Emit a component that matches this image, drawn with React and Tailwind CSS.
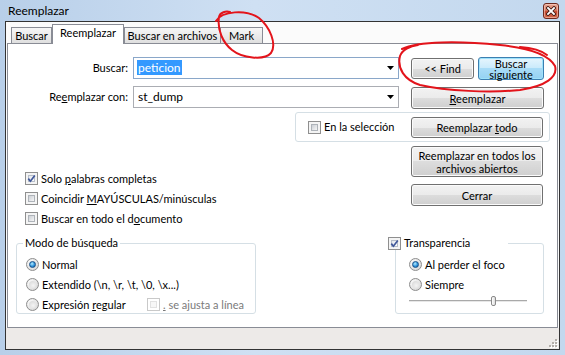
import React from "react";

const BTN =
  "flex shrink-0 items-center justify-center rounded-[3px] border border-[#707070] bg-[linear-gradient(#f2f2f2,#ebebeb_50%,#dddddd_50%,#cfcfcf)] shadow-[inset_0_0_0_1px_#fbfbfb] text-center leading-[13px] whitespace-nowrap";

const TAB =
  "flex h-[16px] shrink-0 items-center justify-center whitespace-nowrap border border-b-0 border-[#898c95] bg-[linear-gradient(#f6f6f6,#ebebeb_50%,#dfdfdf)] leading-[14px]";

function Check({ checked, disabled }) {
  if (disabled) {
    return (
      <span className="flex h-[13px] w-[13px] shrink-0 border border-[#c9c9c9] bg-white p-[2px]">
        <span className="h-full w-full border border-[#e2e2e2] bg-[#f7f7f7]" />
      </span>
    );
  }
  return (
    <span className="relative flex h-[13px] w-[13px] shrink-0 border border-[#8f8f8f] bg-[#f4f4f4] p-[2px]">
      <span
        className={
          checked
            ? "h-full w-full border border-[#b7bec9] bg-[linear-gradient(135deg,#e4e8ee,#fbfbfc)]"
            : "h-full w-full border border-[#aeb3b9] bg-[linear-gradient(135deg,#cbcfd5,#f6f6f6)]"
        }
      />
      {checked && (
        <svg width="11" height="11" viewBox="0 0 11 11" className="absolute left-0 top-0">
          <path d="M2.3 5.6 L4.4 8.2 L8.8 2.4" fill="none" stroke="#40589a" strokeWidth="1.7" />
        </svg>
      )}
    </span>
  );
}

function Radio({ checked }) {
  return (
    <span className="flex h-[13px] w-[13px] shrink-0 items-center justify-center rounded-full border border-[#8d8d8d] bg-[radial-gradient(circle_at_35%_35%,#ffffff,#e2e2e2_60%,#cfcfcf)]">
      {checked ? (
        <span className="h-[7px] w-[7px] rounded-full border border-[#185088] bg-[radial-gradient(circle_at_40%_35%,#b6ecff,#2f94dc_55%,#0d5b9f)]" />
      ) : (
        <span className="h-[7px] w-[7px] rounded-full bg-[radial-gradient(circle_at_60%_65%,#f4f4f4,#d4d4d4)]" />
      )}
    </span>
  );
}

function Combo({ focused, children }) {
  return (
    <div
      className={
        focused
          ? "flex h-[22px] w-[266px] shrink-0 items-center border border-[#8aa7c9] bg-white pl-[3px]"
          : "flex h-[22px] w-[266px] shrink-0 items-center border border-[#abadb3] bg-white pl-[3px]"
      }
    >
      <div className="flex-1 text-[12px] leading-[14px]">{children}</div>
      <svg width="7" height="4" viewBox="0 0 7 4" className="mr-[4px]">
        <path d="M0 0H7L3.5 4Z" fill="#000" />
      </svg>
    </div>
  );
}

function CloseButton() {
  return (
    <div className="mt-[3px] flex h-[16px] w-[16px] items-center justify-center rounded-[3px] border border-[#6e2a1e] bg-[linear-gradient(#e9a895,#d67a62_45%,#c4472d_55%,#d36a4c)] shadow-[inset_0_0_0_1px_rgba(255,220,210,0.5)]">
      <svg width="10" height="10" viewBox="0 0 10 10">
        <path d="M2 2 L8 8 M8 2 L2 8" stroke="#3b1610" strokeWidth="3.4" strokeLinecap="square" />
        <path d="M2 2 L8 8 M8 2 L2 8" stroke="#ffffff" strokeWidth="1.8" strokeLinecap="square" />
      </svg>
    </div>
  );
}

function SizeGrip() {
  const dots = [
    [6, 0],
    [6, 3],
    [3, 3],
    [6, 6],
    [3, 6],
    [0, 6],
  ];
  return (
    <svg width="9" height="9" viewBox="0 0 9 9">
      {dots.map(([x, y]) => (
        <g key={`${x}-${y}`}>
          <rect x={x + 1} y={y + 1} width="2" height="2" fill="#ffffff" />
          <rect x={x} y={y} width="2" height="2" fill="#b3aea9" />
        </g>
      ))}
    </svg>
  );
}

function Annotations() {
  return (
    <svg
      width="565"
      height="355"
      viewBox="0 0 565 355"
      className="pointer-events-none absolute left-0 top-0"
    >
      <g fill="none" stroke="#e3141b" strokeWidth="2" strokeLinecap="round">
        <path d="M216 21 C222 11, 246 9, 259 18 C270 27, 277 44, 271 53 C264 61, 242 58, 232 50 C223 43, 217 30, 219 17 C220 12, 226 11, 230 12" />
        <path d="M402 49 C418 41, 460 41, 500 45 C530 48, 549 55, 555 66 C558 77, 546 86, 520 90 C490 93, 446 91, 420 85 C404 80, 397 68, 400 56 C402 50, 410 46, 418 45 M520 47 C534 48, 542 51, 547 55" />
      </g>
    </svg>
  );
}

export default function App() {
  return (
    <div className="relative flex h-[355px] w-[565px] flex-col overflow-hidden bg-[linear-gradient(90deg,#b8cfe9,#cfe0f3_45%,#c3d8ee)] text-[11px] text-black [font-family:Lato,sans-serif]">
      <div className="flex h-[21px] shrink-0 items-start justify-between pl-[8px] pr-[6px]">
        <span className="mt-[4px] text-[12px] leading-[14px]">Reemplazar</span>
        <CloseButton />
      </div>

      <div className="mx-[5px] flex h-[329px] flex-col border border-[#333333] bg-[#fbfbfb]">
        {/* tabs */}
        <div className="flex h-[21px] shrink-0 items-end pl-[5px]">
          <div className={`${TAB} w-[41px]`}>Buscar</div>
          <div className="relative z-10 -mb-[1px] flex h-[20px] w-[72px] shrink-0 items-start justify-center whitespace-nowrap border border-b-0 border-[#898c95] bg-white pt-[1px] leading-[14px]">
            Reemplazar
          </div>
          <div className={`${TAB} w-[97px]`}>Buscar en archivos</div>
          <div className={`${TAB} -ml-[1px] w-[43px]`}>Mark</div>
        </div>

        {/* panel */}
        <div className="mx-[1px] flex h-[285px] shrink-0 flex-col border border-[#898c95] bg-white">
          <div className="mt-[13px] flex items-start">
            <div className="w-[125px] pr-[5px] text-right leading-[22px]">Buscar:</div>
            <Combo focused>
              <span className="bg-[#3399ff] px-[1px] text-white">peticion</span>
            </Combo>
            <div className={`${BTN} ml-[12px] mt-[1px] h-[21px] w-[63px]`}>&lt;&lt; Find</div>
            <div className="ml-[4px] flex h-[23px] w-[66px] shrink-0 flex-col items-center rounded-[3px] border border-[#3c7fb1] bg-[linear-gradient(#e6f5fd,#c9eafb_50%,#a9dcf7_50%,#94d2f3)] text-center leading-[11px] shadow-[inset_0_0_0_1px_#9ee2fb]">
              <span>Buscar</span>
              <span>siguiente</span>
            </div>
          </div>

          <div className="mt-[6px] flex items-start">
            <div className="w-[125px] pr-[5px] text-right leading-[22px]">
              Re<span className="underline">e</span>mplazar con:
            </div>
            <Combo>
              <span className="px-[1px]">st_dump</span>
            </Combo>
            <div className={`${BTN} ml-[12px] mt-[1px] h-[22px] w-[133px]`}>
              <span>
                <span className="underline">R</span>eemplazar
              </span>
            </div>
          </div>

          <div className="ml-[287px] mt-[3px] flex h-[30px] w-[255px] items-center rounded-[3px] border border-[#d5dfe5]">
            <div className="flex w-[115px] items-center gap-[3px] pl-[12px]">
              <Check />
              <span className="leading-[14px]">En la selección</span>
            </div>
            <div className={`${BTN} h-[21px] w-[132px]`}>
              <span>
                Reemplazar <span className="underline">t</span>odo
              </span>
            </div>
          </div>

          <div className="flex">
            <div className="flex w-[403px] flex-col gap-[7px] pl-[17px] pt-[30px]">
              <div className="flex h-[13px] items-center gap-[3px]">
                <Check checked />
                <span className="leading-[14px]">
                  Solo <span className="underline">p</span>alabras completas
                </span>
              </div>
              <div className="flex h-[13px] items-center gap-[3px]">
                <Check />
                <span className="leading-[14px]">
                  Coincidir <span className="underline">M</span>AYÚSCULAS/minúsculas
                </span>
              </div>
              <div className="flex h-[13px] items-center gap-[3px]">
                <Check />
                <span className="leading-[14px]">
                  Buscar en todo el d<span className="underline">o</span>cumento
                </span>
              </div>
            </div>
            <div className="flex w-[132px] flex-col pt-[4px]">
              <div className={`${BTN} h-[31px] w-[132px]`}>
                Reemplazar en todos los
                <br />
                archivos abiertos
              </div>
              <div className={`${BTN} mt-[7px] h-[22px] w-[132px]`}>Cerrar</div>
            </div>
          </div>

          <div className="mt-[11px] flex items-start">
            <fieldset className="ml-[8px] h-[78px] w-[240px] rounded-[3px] border border-[#d5dfe5]">
              <legend className="ml-[6px] px-[2px] leading-[14px]">Modo de búsqueda</legend>
              <div className="flex flex-col gap-[7px] pl-[9px] pt-[8px]">
                <div className="flex h-[13px] items-center gap-[3px]">
                  <Radio checked />
                  <span className="leading-[14px]">Normal</span>
                </div>
                <div className="flex h-[13px] items-center gap-[3px]">
                  <Radio />
                  <span className="leading-[14px]">Extendido (\n, \r, \t, \0, \x...)</span>
                </div>
                <div className="flex h-[13px] items-center">
                  <div className="flex w-[121px] items-center gap-[3px]">
                    <Radio />
                    <span className="leading-[14px]">
                      Expresión <span className="underline">r</span>egular
                    </span>
                  </div>
                  <Check disabled />
                  <span className="ml-[3px] leading-[14px] text-[#7a7a7a]">
                    <span className="underline">.</span> se ajusta a línea
                  </span>
                </div>
              </div>
            </fieldset>

            <fieldset className="ml-[139px] h-[78px] w-[149px] rounded-[3px] border border-[#d5dfe5]">
              <legend className="-ml-[8px] flex h-[14px] w-[120px] items-center gap-[3px]">
                <Check checked />
                <span className="leading-[14px]">Transparencia</span>
              </legend>
              <div className="flex flex-col pl-[13px] pt-[8px]">
                <div className="flex h-[13px] items-center gap-[3px]">
                  <Radio checked />
                  <span className="leading-[14px]">Al perder el foco</span>
                </div>
                <div className="mt-[7px] flex h-[13px] items-center gap-[3px]">
                  <Radio />
                  <span className="leading-[14px]">Siempre</span>
                </div>
                <div className="mt-[5px] flex h-[10px] w-[118px] items-center">
                  <div className="h-[2px] w-[82px] border-t border-[#a9a9a9] bg-[#e7e7e7]" />
                  <div className="h-[10px] w-[5px] rounded-[2px] border border-[#8a8a8a] bg-[linear-gradient(90deg,#ffffff,#dcdcdc)]" />
                  <div className="h-[2px] flex-1 border-t border-[#a9a9a9] bg-[#e7e7e7]" />
                </div>
              </div>
            </fieldset>
          </div>
        </div>

        {/* status strip */}
        <div className="flex flex-1 items-end justify-end bg-[#edeae8] pb-[1px] pr-[1px]">
          <SizeGrip />
        </div>
      </div>

      <Annotations />
    </div>
  );
}
